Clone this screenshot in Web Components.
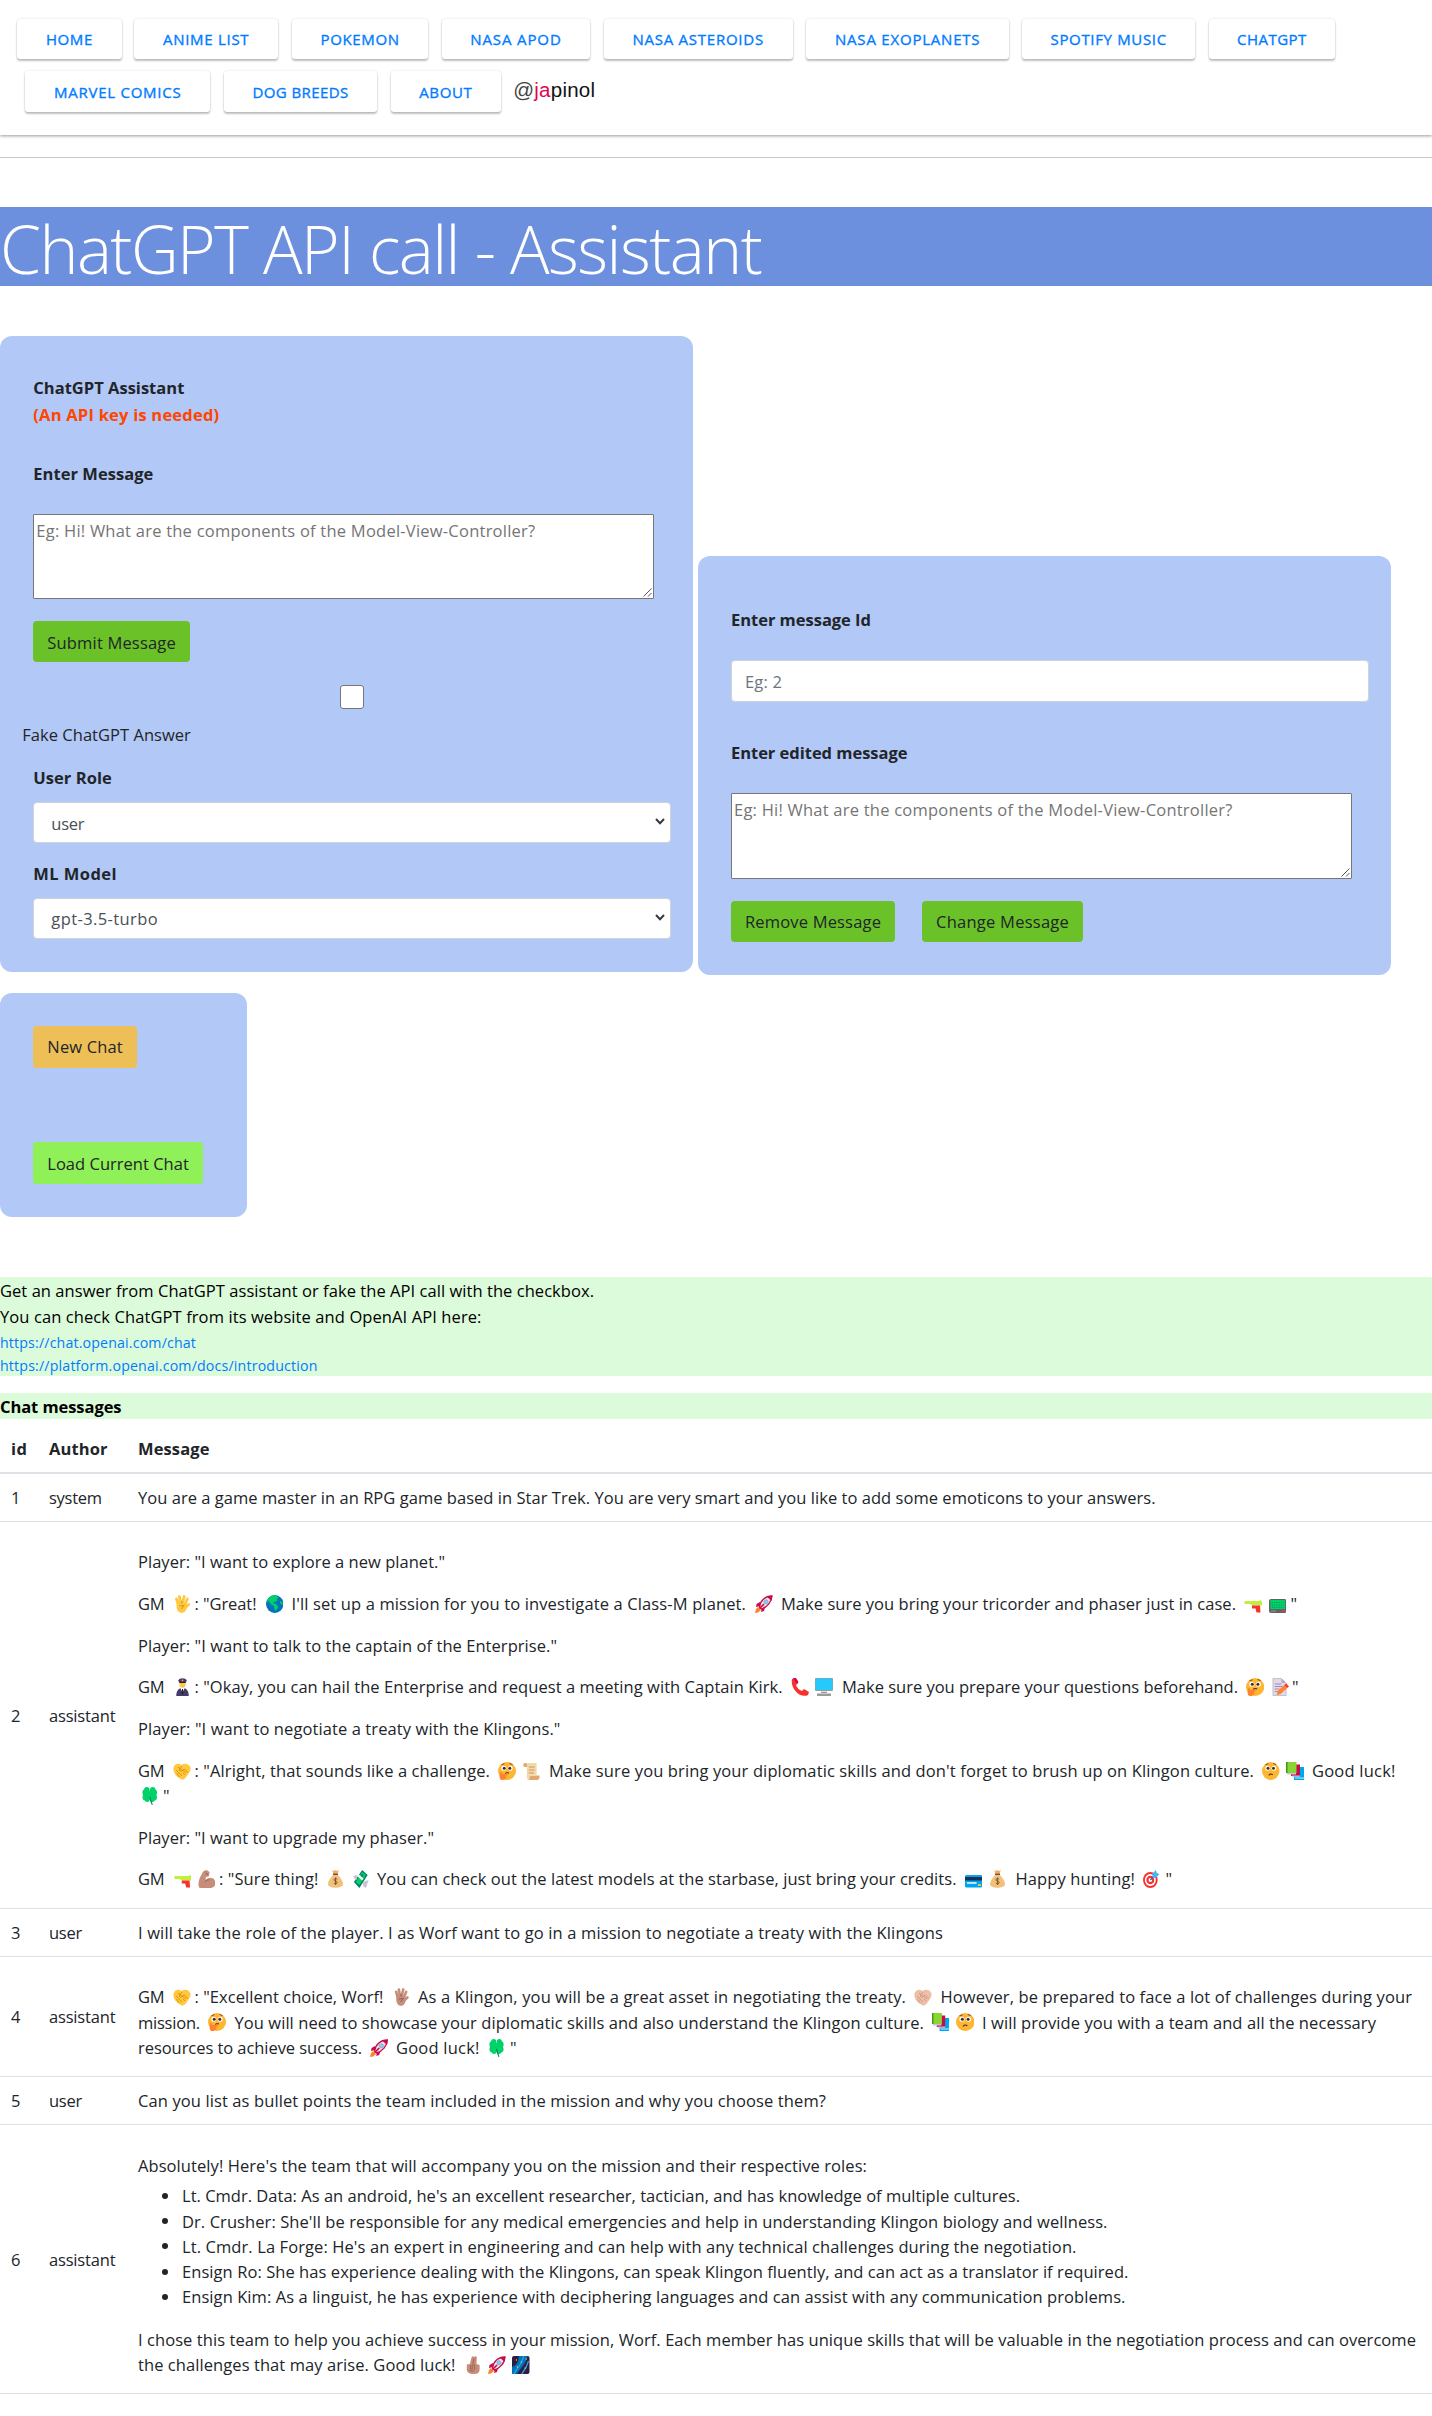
<!DOCTYPE html>
<html lang="en">
<head>
<meta charset="utf-8">
<title>ChatGPT API call - Assistant</title>
<style>
html,body{margin:0;padding:0;background:#fff}
body{font:400 16.5px/26.600px "Open Sans","Noto Sans",sans-serif;color:#212529;height:2416px;overflow:hidden}
</style>
</head>
<body>
<chat-page></chat-page>
<script>
const define = (name, html, init) => customElements.define(name, class extends HTMLElement {
  connectedCallback() {
    if (this.shadowRoot) return;
    this.attachShadow({mode: 'open'}).innerHTML = html;
    if (init) init.call(this, this.shadowRoot);
  }
});

/* Emoji drawings on an 18 x 18 grid */
const vulcan = (c, d) => `<g fill="none" stroke="${c}" stroke-linecap="round" stroke-width="2.900"><path d="M3.600 4l2 6M6.600 1.600L8 9M11.500 1.600L9.500 9M14.800 4L12 10M16.200 9.500L12 13"/></g><path fill="${c}" d="M4 7.500l9.500.5 1 4c-1 3-2 5.800-5.500 5.800S4 15 3.600 12z"/><path d="M6.500 11l5-.5-3 3.500M9 6v2.500" fill="none" stroke="${d}"/>`;
const shake = (c, d) => `<path fill="${c}" d="M.5 5.500C2 1.500 5 1 8.500 3 12 .5 16 1.500 17.500 5.500c.7 4-2.500 6.500-4 9-1 2-3.500 4-5.500 2.500C3.500 15-.5 10 .5 5.500z"/><path d="M5 5l8 6M3 8l6 6M9 4L6 8l2 1.500L11 7l4 3.500M3.500 11l3 4M12 13l-2-2" fill="none" stroke="${d}" stroke-width=".7"/>`;
const face = `<ellipse cx="9" cy="9" rx="9" ry="9" fill="#fdb62f"/><circle cx="5.800" cy="6.300" r="2.500" fill="#fff"/><circle cx="12.200" cy="6.300" r="2.500" fill="#fff"/><circle cx="6.200" cy="6.200" r="1.500" fill="#402a32"/><circle cx="11.800" cy="6.200" r="1.500" fill="#402a32"/><path d="M3.500 2.700l3-1M11.500 1.500l3 1" stroke="#8a4b22" fill="none"/>`;
const E = {
  vulcan: vulcan('#ffc83d', '#e08d1c'),
  vulcanBrown: vulcan('#c68e7a', '#8f5f52'),
  globe: '<circle cx="9" cy="9" r="9" fill="#0074ba"/><path fill="#00d26a" d="M2 4C4 1 8-.5 11 .8L13 3 11 4l1 2-3 .5L7 8l3 1 2 2c1 2-1 3-2 5l-1-1-1-4-3-2L3 6 1 8zM14 6l3 1v3l-2-1z"/>',
  rocket: '<path fill="#ca0b4a" d="M5 7L1.500 9 1 12l4-1M10 12l-1 4-3 1 1-4"/><path fill="#e9e6ef" stroke="#ca0b4a" stroke-width="1.300" d="M4.500 12C5 6 10 1 16.800 1c.2 6-5 11.500-10.500 13z"/><path fill="#ca0b4a" d="M12 1.800L17.500.5 16.500 6z"/><circle cx="11" cy="6.800" r="2.100" fill="#83cbff" stroke="#998ea4" stroke-width=".6"/><path fill="#ff822d" d="M3 12l3 3-3 2.500-3 .5 1-4z"/><path d="M4.500 13.500L9 9" stroke="#ca0b4a" stroke-width="1.600"/>',
  gun: '<path fill="#c3ef3c" d="M1 6h14l2-1 1 2v3.500H8L6 9H1L0 7.500z"/><path fill="#f8312f" d="M8 10.500h8l.5 7H12.500l-1-4H8z"/>',
  pager: '<rect y="4" width="18" height="14" rx="2" fill="#636363"/><rect x="1.500" y="5" width="15" height="9" fill="#00d26a"/><path d="M3 7.500h12M3 10h12M3 12.300h12" stroke="#087a45" stroke-width=".8" stroke-dasharray="1 1.300"/><path d="M2 16h5" stroke="#999"/><path d="M13 16h3" stroke="#f92f60" stroke-width="1.500"/>',
  pilot: '<path fill="#433b6b" d="M1.500 18c0-5 2.500-8 7.500-8s7.500 3 7.500 8z"/><path fill="#fff" d="M6.500 10h5L9 15z"/><path fill="#212121" d="M8.500 11h1l.7 4L9 17l-1.200-2z"/><circle cx="9" cy="6" r="3.800" fill="#ffc83d"/><path fill="#533566" d="M4 2.500C5-.5 13-.5 14 2.500L12.900 5H5.100z"/><path d="M6 4.500h6" stroke="#212121"/><circle cx="9" cy="2.300" r=".9" fill="#f9c23c"/>',
  phone: '<path fill="#f8312f" d="M1 1l3-1 3 5-2 2c1 3 3 5 6 6l2-2 5 3-1 3c-8 4-18-7-16-16z"/><path fill="#ca0b4a" d="M2 0h3l2.500 4L6 6z"/>',
  desktop: '<rect width="18" height="13" rx="1" fill="#9b9b9b"/><path fill="#26c9fc" d="M.5.5h17v11.500H.5z"/><path fill="#9b9b9b" d="M6 13h6v2H6zM2 15.500h14V18H2z"/><path fill="#ddd" d="M6 13h6v1H6z"/>',
  think: face + '<path d="M7 11.500q2-1.500 4-.5" stroke="#402a32" fill="none"/><path fill="#ff822d" d="M2 10.500c1-1 2 0 2 1.500l5-.5c1 .2 1 1.500 0 1.700L8 14c1.500 2-1 4-4 4-2 0-3-2-2-7.500z"/>',
  worry: face + '<path d="M7 13.300q1.500-2.300 4-.5" stroke="#402a32" stroke-width="1.200" fill="none"/>',
  memo: '<path fill="#e1d8ec" stroke="#b4acbc" stroke-width=".7" d="M1 .5h9L15 5v12.500H1z"/><path fill="#b4acbc" d="M10 .5V5h5z"/><path d="M3 6h7M3 8.500h8M3 11h5M3 13.500h3" stroke="#998ea4"/><path fill="#ff822d" d="M5 17l1-4 7-6 3 3-7 6z"/><path fill="#f8312f" d="M13 7l2-1.500L18 8.500 16 10z"/>',
  scroll: '<path fill="#f3d9a8" d="M2 1h12v12h3c0 3-1 5-3 5H6c-2 0-2-2-2-4V5H1C0 3 .5 1 2 1z"/><path fill="#e1a872" d="M2 1c2 0 2.500 2 2 4H1C0 3 .5 1 2 1zM7 14h10c0 3-1 4-3 4H6c1-1 1-2 1-4z"/><path d="M6 5h6M6 8h6M6 11h5" stroke="#c89461"/>',
  books: '<path fill="#00a6ed" d="M8 5h10v13H8z"/><path fill="#cdeaff" d="M9 15.500h9v1H9z"/><path fill="#ca0b4a" d="M5 2.500h9V14H5z"/><path fill="#86d72f" d="M0 0h10.500v11H0z"/><path fill="#44911b" d="M0 0h1.500v11H0z"/><path fill="#c9c2d3" d="M1 11h9v1.500H1zM6 13.500h8v1.300H6z"/>',
  clover: '<g fill="#00d26a"><circle cx="5.600" cy="3.300" r="3.200"/><circle cx="12.400" cy="3.300" r="3.200"/><circle cx="3.800" cy="5.600" r="3.300"/><circle cx="14.200" cy="5.600" r="3.300"/><circle cx="3.900" cy="10.200" r="3.300"/><circle cx="14.100" cy="10.200" r="3.300"/><circle cx="6" cy="12" r="3"/><circle cx="12" cy="12" r="3"/><circle cx="9" cy="8" r="4"/></g><path d="M9 10q1 4 3 7.800" stroke="#008463" stroke-width="1.300" fill="none"/>',
  muscle: '<path fill="#c68e7a" d="M4 4C5 1 7-.5 10 .5l2 2-1 4-3 .5v3c3-3 8-3 9.500 1 1.500 4-1 7-6 7H2c-3-2-1-10 2-14z"/><path d="M7 12c1.500-2 3-2.500 4.500-2M8 3l2.500 2" fill="none" stroke="#8f5f52"/>',
  bag: '<path fill="#f3ad61" d="M5 0l2 1 2-1 2 1 2-1-1.500 4h-5z"/><path d="M6 4.300h6" stroke="#6d4534" stroke-width="1.300"/><path fill="#f3c07a" d="M6 5h6c3 3 6 6 6 9 0 5-18 5-18 0 0-3 3-6 6-9z"/><path d="M11 9.300c-1-1.200-3.800-1-3.800.5 0 1.900 3.800 1 3.800 2.700 0 1.600-3 1.600-4 .4M9.100 7.500v7.500" fill="none" stroke="#6d4534" stroke-width=".9"/>',
  cash: '<path fill="#008463" d="M10 0l6 5L7 18 1 12z"/><path fill="#00d26a" d="M10 2l4 3-7 10-4-3z"/><path fill="#fff" d="M6.500 4.500l5 4-1.500 2-5-4z"/><path fill="#c9c2d3" d="M0 6l5-1-1 5-2-1zM11 12l6-2-3 8-3-2z"/><circle cx="10" cy="5.500" r="1.300" fill="#008463"/>',
  card: '<rect y="5" width="18" height="12.500" rx="1.500" fill="#00a6ed"/><path fill="#1a2f55" d="M0 7h18v3.500H0z"/><path fill="#b9e6ff" d="M2 12h10v2H2z"/><path fill="#f9c23c" d="M13.500 14h3v2h-3z"/>',
  target: '<circle cx="8" cy="10" r="8" fill="#f8312f"/><circle cx="8" cy="10" r="6" fill="#fff"/><circle cx="8" cy="10" r="4.300" fill="#f8312f"/><circle cx="8" cy="10" r="2" fill="#fff"/><path d="M8 10l5-5" stroke="#1a6fb5" stroke-width="1.500"/><path fill="#46b4f5" d="M10 4l4-4 1 3 3 1-4 4h-3z"/>',
  crossed: '<path fill="#c68e7a" d="M5 8L7 1.800C7.600-.4 9.600-.2 10 1.200L11 .5c1.500-1 3.200.2 2.900 1.500L13.500 8l4 1v4.500c0 3-2.500 4.500-7.500 4.500-6 0-9-2-9-5V8.500z"/><path d="M10.300 2L9 8M6 9v4h2V9h3v4M4 14q5 3 7-1" fill="none" stroke="#8f5f52" stroke-width=".9"/>',
  galaxy: '<rect width="18" height="18" rx="2" fill="#321b41"/><path fill="#0074ba" d="M7 0h9C15 7 9 12 5 18H0v-7C5 9 7 5 7 0z"/><path d="M12 0C11 7 6 11 2 18M17 5q-2 7-7 13" stroke="#26a4e8" fill="none" stroke-width="1.300"/><path d="M4 4h1M9 6h1M5 11h1M13 12h1M14 3h1" stroke="#f9c23c" stroke-width="1.300"/>'
};
E.shake = shake('#ffc83d', '#d67d00');
E.shakePale = shake('#edbfa8', '#c38d78');
define('chat-emoji', '<style>:host{display:block;height:18px;flex:none}svg{display:block;width:100%;height:18px}</style><svg viewBox="0 0 18 18" preserveAspectRatio="none"></svg>', function (r) {
  r.querySelector('svg').innerHTML = E[this.getAttribute('name')];
});

define('nav-button', `<style>:host{display:flex;box-sizing:border-box;height:40.500px;padding-top:1.300px;align-items:center;justify-content:center;border-radius:3px;background:#fff;color:#007bff;font-size:15px;font-weight:500;-webkit-text-stroke:.35px #007bff;
 box-shadow:0 2px 2px rgba(0,0,0,.24),0 0 2px rgba(0,0,0,.16)}</style><slot></slot>`, function () { this.style.width = this.getAttribute('w') + 'px'; });

const T = (w, t) => `<fit-text w="${w}">${t}</fit-text>`;
const N = (w, tw, t, ml) => `<nav-button w="${w}" style="margin-left:${ml}px">${T(tw, t)}</nav-button>`;
define('site-nav', `<style>:host{display:block;box-sizing:border-box;height:135px;padding-top:18.700px;box-shadow:0 1px 3px rgba(0,0,0,.4)}
.r{display:flex}.r+.r{margin-top:12px}.logo{font:20.500px/44px "Liberation Sans",Arial,sans-serif;color:#111;margin-left:12.500px;height:41px;margin-top:-3px}.at{color:#444}.ja{color:#e6004f}</style>
<div class="r">${N(104.5,46.500,'HOME',17)}${N(144,86,'ANIME LIST',12.5)}${N(136,79,'POKEMON',14)}${N(148.500,91,'NASA APOD',13.500)}${N(189,131,'NASA ASTEROIDS',13.500)}${N(203,145,'NASA EXOPLANETS',13.500)}${N(173,116,'SPOTIFY MUSIC',13)}${N(126.500,69.500,'CHATGPT',13.500)}</div>
<div class="r">${N(185,127,'MARVEL COMICS',25)}${N(153,96,'DOG BREEDS',14)}${N(110,53,'ABOUT',13.700)}<div class="logo"><fit-text w="82"><span class="at">@</span><span class="ja">ja</span>pinol</fit-text></div></div>`);

define('page-title', `<style>:host{display:flex;height:79px;background:#6c90dd;color:#fff;margin-top:49px;font-size:66px;font-weight:300;line-height:83.500px}</style><slot></slot>`);
define('panel-card', `<style>:host{display:flex;flex-direction:column;align-items:flex-start;box-sizing:border-box;background:#b2c8f6;border-radius:12px;padding-left:33.300px}</style><slot></slot>`);
define('action-button', `<style>:host{display:flex;box-sizing:border-box;height:41.500px;align-items:center;padding:1.500px 0 0 14px;border-radius:4px;background:var(--c,#6ac128);color:#212529}</style><slot></slot>`, function () { this.style.width = this.getAttribute('w') + 'px'; });
define('text-area', `<style>:host{display:flex;box-sizing:border-box;border:1px solid #767676;background:#fff;color:#757575;padding:3px 2px;justify-content:space-between;border-radius:1px}svg{align-self:flex-end;width:9px;height:9px;margin:0 -1px -2px 0}</style><slot></slot><svg viewBox="0 0 9 9"><path d="M.5 8.500l8-8M5 8.500L8.500 5" stroke="#555" fill="none"/></svg>`);
define('field-box', `<style>:host{display:flex;box-sizing:border-box;align-items:center;border:1px solid #ced4da;background:#fff;color:#6c757d;border-radius:4px;padding:1.500px 0 0 14px}:host([select]){color:#495057;padding:3px 5px 0 17px;justify-content:space-between}svg{display:none;width:10px;height:7px;margin-top:-4px}:host([select]) svg{display:block}</style><slot></slot><svg viewBox="0 0 10 7"><path d="M1 1l4 4.200L9 1" fill="none" stroke="#343a40" stroke-width="2"/></svg>`);
define('check-box', `<style>:host{display:block;box-sizing:border-box;width:24.500px;height:24px;border:1.300px solid #767676;border-radius:3px;background:#fff}</style>`);

/* A message line: items are [start x, end x, text or @emoji] */
class ChatLine extends HTMLElement {
  set items(list) {
    const root = this.shadowRoot || this.attachShadow({mode: 'open'});
    let at = 138;
    root.innerHTML = '<style>:host{display:flex;height:25.200px;line-height:25.400px;align-items:flex-start}chat-emoji{margin-top:3.800px}</style>' + list.map(([a, b, t]) => {
      const gap = a - at; at = b;
      return t[0] === '@' ? `<chat-emoji name="${t.slice(1)}" style="width:${b - a}px;margin-left:${gap}px"></chat-emoji>`
        : `<fit-text w="${b - a}" style="margin-left:${gap}px">${t}</fit-text>`;
    }).join('');
  }
}
customElements.define('chat-line', ChatLine);

define('bullet-line', `<style>:host{display:flex;height:25.200px;line-height:25.200px;align-items:center;padding-left:24px}i{width:6px;height:6px;border-radius:50%;background:#212529;margin-right:14px}</style><i></i><slot></slot>`);

const G = (e, n = [173, 191]) => [[138, 164.500, 'GM'], [...n, '@' + e]];
const rows = [
  {id: '1', who: 'system', ww: 53, h: 48, body: [[[138, 1155.500, 'You are a game master in an RPG game based in Star Trek. You are very smart and you like to add some emoticons to your answers.']]]},
  {id: '2', who: 'assistant', ww: 66.500, h: 387, pad: 27.600, body: [
    [[138, 445, 'Player: "I want to explore a new planet."']],
    [...G('vulcan', [173, 190.500]), [194.500, 256.500, ': "Great!'], [265.500, 283, '@globe'], [291.500, 746, "I'll set up a mission for you to investigate a Class-M planet."], [754.500, 772.500, '@rocket'], [781, 1236, 'Make sure you bring your tricorder and phaser just in case.'], [1244, 1262, '@gun'], [1268.500, 1286, '@pager'], [1290.500, 1296.500, '"']],
    [[138, 557, 'Player: "I want to talk to the captain of the Enterprise."']],
    [...G('pilot', [174.500, 189.500]), [194.500, 782.500, ': "Okay, you can hail the Enterprise and request a meeting with Captain Kirk.'], [791, 809, '@phone'], [815, 833, '@desktop'], [842, 1238, 'Make sure you prepare your questions beforehand.'], [1245.800, 1264, '@think'], [1272, 1289, '@memo'], [1292, 1298, '"']],
    [[138, 560.500, 'Player: "I want to negotiate a treaty with the Klingons."']],
    [...G('shake'), [194.500, 490, ': "Alright, that sounds like a challenge.'], [498, 516, '@think'], [522.500, 540, '@scroll'], [549, 1254, "Make sure you bring your diplomatic skills and don't forget to brush up on Klingon culture."], [1262, 1279.500, '@worry'], [1285.500, 1303.500, '@books'], [1312, 1395.500, 'Good luck!']],
    [['tight'], [141.500, 157, '@clover'], [163, 168.500, '"']],
    [[138, 434, 'Player: "I want to upgrade my phaser."']],
    [...G('gun', [173.500, 191]), [197.500, 215, '@muscle'], [219, 318.500, ': "Sure thing!'], [328, 343, '@bag'], [352.500, 369, '@cash'], [377, 956.500, 'You can check out the latest models at the starbase, just bring your credits.'], [964.700, 982, '@card'], [990, 1005, '@bag'], [1015.500, 1135, 'Happy hunting!'], [1143.500, 1160, '@target'], [1165.500, 1171, '"']]
  ]},
  {id: '3', who: 'user', ww: 33, h: 48, body: [[[138, 943, 'I will take the role of the player. I as Worf want to go in a mission to negotiate a treaty with the Klingons']]]},
  {id: '4', who: 'assistant', ww: 66.500, h: 120, pad: 27.600, body: [
    [...G('shake'), [194.500, 383.500, ': "Excellent choice, Worf!'], [393, 409, '@vulcanBrown'], [418, 906, 'As a Klingon, you will be a great asset in negotiating the treaty.'], [914, 932, '@shakePale'], [940.500, 1412, 'However, be prepared to face a lot of challenges during your']],
    [['tight'], [138, 200, 'mission.'], [208, 226, '@think'], [234.500, 924, 'You will need to showcase your diplomatic skills and also understand the Klingon culture.'], [932, 949, '@books'], [955.500, 974, '@worry'], [982, 1376, 'I will provide you with a team and all the necessary']],
    [['tight'], [138, 362, 'resources to achieve success.'], [369.500, 388, '@rocket'], [396, 479.500, 'Good luck!'], [489, 504, '@clover'], [510, 515.500, '"']]
  ]},
  {id: '5', who: 'user', ww: 33, h: 48, body: [[[138, 826, 'Can you list as bullet points the team included in the mission and why you choose them?']]]},
  {id: '6', who: 'assistant', ww: 66.500, h: 269, pad: 28.600, body: [
    [[138, 867, "Absolutely! Here's the team that will accompany you on the mission and their respective roles:"]],
    ['li', 838, "Lt. Cmdr. Data: As an android, he's an excellent researcher, tactician, and has knowledge of multiple cultures."],
    ['li', 925.500, "Dr. Crusher: She'll be responsible for any medical emergencies and help in understanding Klingon biology and wellness."],
    ['li', 894.500, "Lt. Cmdr. La Forge: He's an expert in engineering and can help with any technical challenges during the negotiation."],
    ['li', 946.500, 'Ensign Ro: She has experience dealing with the Klingons, can speak Klingon fluently, and can act as a translator if required.'],
    ['li', 943.500, 'Ensign Kim: As a linguist, he has experience with deciphering languages and can assist with any communication problems.'],
    [[138, 1416, 'I chose this team to help you achieve success in your mission, Worf. Each member has unique skills that will be valuable in the negotiation process and can overcome']],
    [['tight'], [138, 455.500, 'the challenges that may arise. Good luck!'], [465.500, 479.500, '@crossed'], [488, 506, '@rocket'], [512, 529.500, '@galaxy']]
  ]}
];

define('chat-row', `<style>:host{display:grid;grid-template-columns:38px 89px 1fr;padding-left:11px;box-sizing:border-box;border-bottom:1px solid #dee2e6;align-items:center}
.id,.who{padding-top:2.600px}.m{display:flex;flex-direction:column;align-self:stretch;justify-content:center;padding-top:1.500px}.m.top{justify-content:flex-start}
chat-line+chat-line:not(.tight){margin-top:16.500px}chat-line+bullet-line{margin-top:4.900px}bullet-line+chat-line:not(.tight){margin-top:17.800px}</style><div class="id"></div><div class="who"></div><div class="m"></div>`);
customElements.define('chat-table', class extends HTMLElement {
  connectedCallback() {
    const root = this.attachShadow({mode: 'open'});
    root.innerHTML = `<style>:host{display:block}.h{display:grid;grid-template-columns:38px 89px 1fr;padding:8px 0 0 11px;height:55px;box-sizing:border-box;border-bottom:2px solid #dee2e6;align-items:center;font-weight:700}</style><div class="h"><div>${T(16,'id')}</div><div>${T(58.500,'Author')}</div><div>${T(71.500,'Message')}</div></div>`;
    for (const r of rows) {
      const el = document.createElement('chat-row');
      el.style.height = r.h + 'px';
      root.append(el);
      const s = el.shadowRoot, m = s.querySelector('.m');
      s.querySelector('.id').innerHTML = T(9.500, r.id);
      s.querySelector('.who').innerHTML = T(r.ww, r.who);
      if (r.pad) { m.classList.add('top'); m.style.paddingTop = r.pad + 'px'; }
      for (const b of r.body) {
        if (b[0] === 'li') { const l = document.createElement('bullet-line'); l.innerHTML = T(b[1], b[2]); m.append(l); continue; }
        const l = document.createElement('chat-line');
        l.items = b.filter(i => i[0] !== 'tight');
        if (b[0][0] === 'tight') l.className = 'tight';
        m.append(l);
      }
    }
  }
});

const ph = 'Eg: Hi! What are the components of the Model-View-Controller?';
const L = (mt, w, t, x = '') => `<div style="margin-top:${mt}px;height:25px;${x}">${T(w, t)}</div>`;
define('chat-page', `<style>:host{display:block}
hr{border:0;height:1px;background:#c8c8c8;margin:22px 0 0}
.cards{display:flex;gap:4.700px;margin-top:50px;align-items:flex-start}
.info{background:#dcfbda;color:#000}.info a{display:block;color:#007bff;font-size:14.200px;height:23.500px;line-height:25px}
</style>
<site-nav></site-nav><hr>
<page-title>${T(762,'ChatGPT API call - Assistant')}</page-title>
<div class="cards">
<panel-card style="width:693px;height:636px">
${L(39.300,151,'ChatGPT Assistant','font-weight:700')}
${L(2,186,'(An API key is needed)','font-weight:700;color:#ff4500')}
${L(34,120,'Enter Message','font-weight:700')}
<text-area style="width:620.500px;height:85px;margin-top:27.700px">${T(499,ph)}</text-area>
<action-button w="157" style="margin-top:22px;padding-top:2.500px">${T(128.500,'Submit Message')}</action-button>
<check-box style="margin:22.500px 0 0 306.500px"></check-box>
${L(13,168.500,'Fake ChatGPT Answer','margin-left:-11px')}
${L(17.700,78.500,'User Role','font-weight:700')}
<field-box select style="width:637.500px;height:40.500px;margin-top:12.500px">${T(33,'user')}</field-box>
${L(18.500,83.500,'ML Model','font-weight:700')}
<field-box select style="width:637.500px;height:41px;margin-top:11.500px">${T(106.500,'gpt-3.5-turbo')}</field-box>
</panel-card>
<panel-card style="width:693.300px;height:419px;margin-top:220px">
${L(51.300,140,'Enter message Id','font-weight:700')}
<field-box style="width:638px;height:41.500px;margin-top:28.200px;padding-left:13px">${T(37,'Eg: 2')}</field-box>
${L(38.300,176.500,'Enter edited message','font-weight:700')}
<text-area style="width:621px;height:86px;margin-top:27.700px">${T(498.500,ph)}</text-area>
<div style="display:flex;gap:27px;margin-top:22px"><action-button w="164">${T(136,'Remove Message')}</action-button><action-button w="161">${T(133,'Change Message')}</action-button></div>
</panel-card>
</div>
<panel-card style="width:247px;height:224px;margin-top:18px;padding-top:33px">
<action-button w="104" style="--c:#eebf56">${T(75.500,'New Chat')}</action-button>
<action-button w="170" style="--c:#90f057;margin-top:74.900px;padding-top:2px">${T(141.500,'Load Current Chat')}</action-button>
</panel-card>
<div class="info" style="margin-top:59.800px;height:99px;display:flow-root">
${L(1,594,'Get an answer from ChatGPT assistant or fake the API call with the checkbox.')}
${L(1,481.500,'You can check ChatGPT from its website and OpenAI API here:')}
<a style="margin-top:1px">${T(196,'https://chat.openai.com/chat')}</a><a>${T(317.500,'https://platform.openai.com/docs/introduction')}</a></div>
<div class="info" style="margin-top:17px;height:26px;font-weight:700;display:flow-root">${L(1,121.500,'Chat messages')}</div>
<chat-table></chat-table>`);

/* Spreads a run of text over the width given in its w attribute */
customElements.define('fit-text', class extends HTMLElement {
  connectedCallback() {
    if (this.shadowRoot) return;
    this.attachShadow({mode: 'open'}).innerHTML = '<style>:host{display:inline-block;white-space:nowrap;flex:none;vertical-align:top}</style><slot></slot>';
    const w = +this.getAttribute('w'), n = this.textContent.length;
    const natural = this.getBoundingClientRect().width;
    this.style.letterSpacing = (n > 1 ? (w - natural) / (n - .5) : 0).toFixed(4) + 'px';
    this.style.width = w + 'px';
  }
});
</script>
</body>
</html>
